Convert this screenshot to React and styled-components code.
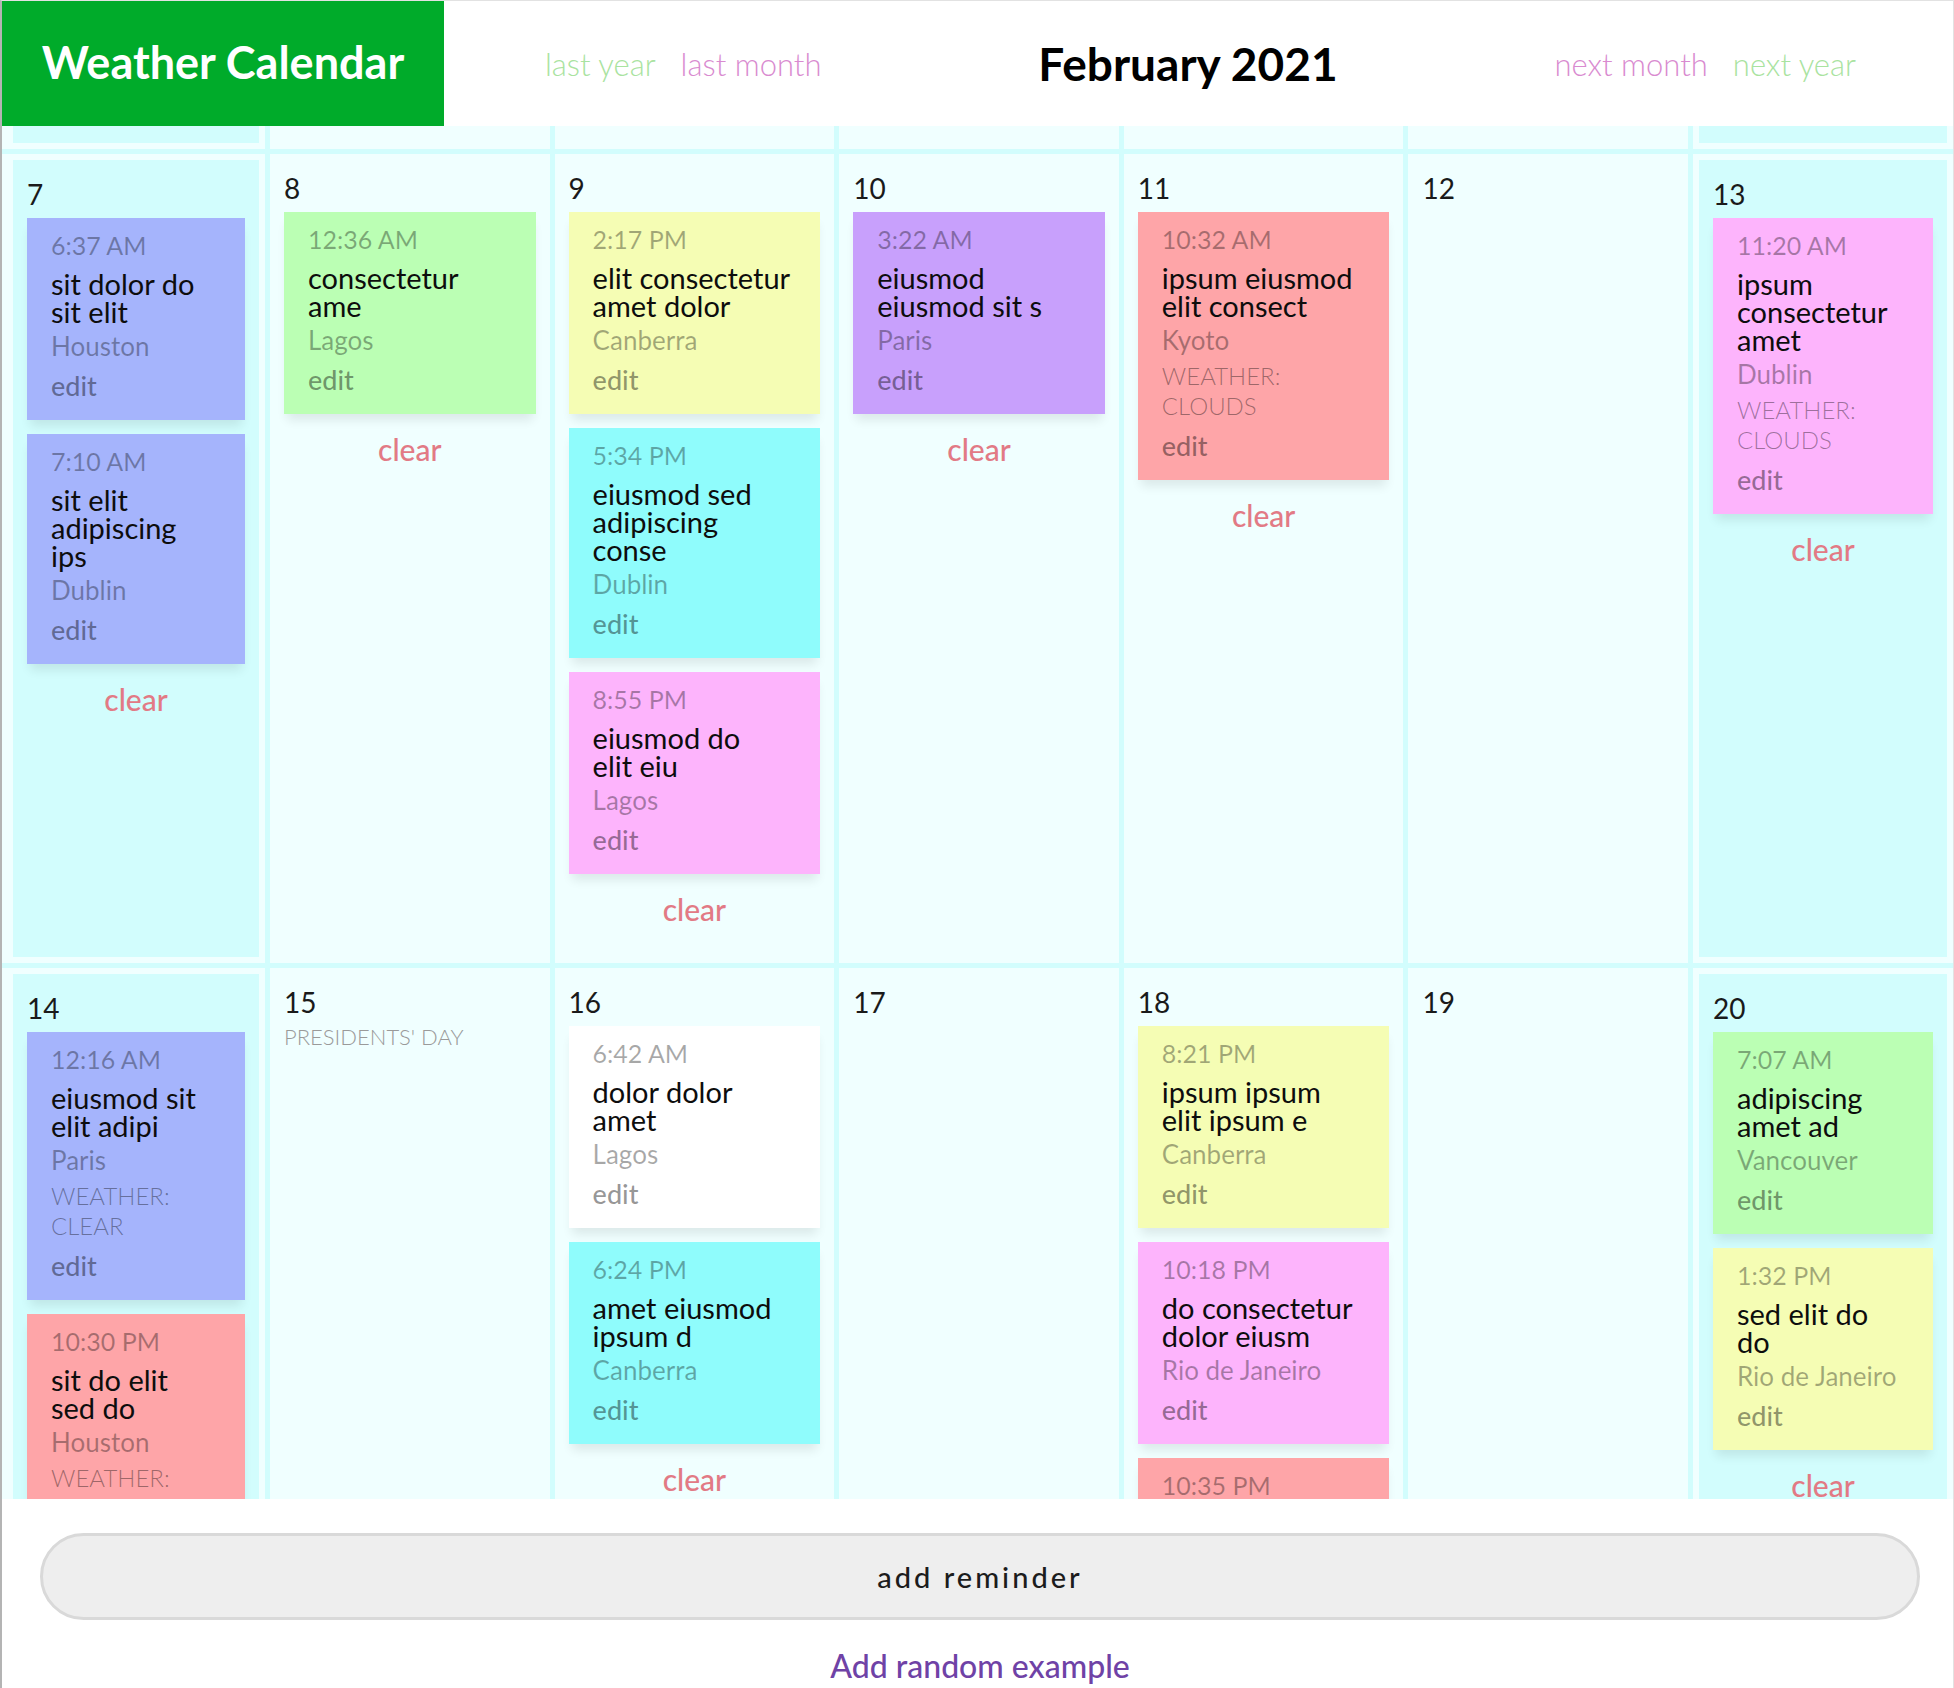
import { useLayoutEffect, useRef } from "react";
import styled, { createGlobalStyle } from "styled-components";

const AZURE = "#f0ffff";
const CYAN = "#d2fdfd";

const palette = {
  blue: "#a5b4fc",
  green: "#bbffb4",
  yellow: "#f5fdb4",
  purple: "#c8a0fc",
  cyan: "#8ffcfc",
  pink: "#fdb4fc",
  red: "#fea5a8",
  white: "#ffffff",
};

const GlobalStyle = createGlobalStyle`
  html, body {
    margin: 0;
    padding: 0;
  }
  body {
    font-family: Lato, "Open Sans", sans-serif;
    background: #fff;
    color: #111;
  }
`;

const Page = styled.div`
  box-sizing: border-box;
  height: 100vh;
  display: flex;
  flex-direction: column;
  border-left: 2px solid #b4b4b4;
  border-top: 1px solid #e2e2e2;
  border-right: 1px solid #e2e2e2;
`;

const Header = styled.header`
  flex-shrink: 0;
  height: 125px;
  display: flex;
`;

const Brand = styled.h1`
  margin: 0;
  padding-bottom: 4px;
  width: 442px;
  background: #00ab2a;
  color: #fff;
  font-size: 45px;
  font-weight: 700;
  display: flex;
  align-items: center;
  justify-content: center;
`;

const Nav = styled.nav`
  flex: 1;
  display: flex;
  align-items: center;
  justify-content: space-between;
  padding: 0 97px 0 101px;
`;

const NavGroup = styled.div`
  display: flex;
  gap: 25px;
`;

const NavLink = styled.a`
  font-size: 31px;
  font-weight: 300;
  cursor: pointer;
  color: ${(p) => (p.$tone === "year" ? "#a9e3a0" : "#d98bd0")};
`;

const MonthTitle = styled.h2`
  margin: 0;
  font-size: 46px;
  font-weight: 700;
  color: #000;
`;

const Calendar = styled.div`
  flex: 1;
  min-height: 0;
  overflow: hidden;
  position: relative;
  background: ${CYAN};
  display: grid;
  gap: 5px;
  align-content: start;
`;

const Week = styled.div`
  display: grid;
  grid-template-columns: 263px repeat(5, minmax(0, 1fr)) 260px;
  gap: 5px;
`;

const Day = styled.div`
  box-sizing: border-box;
  min-width: 0;
  padding: 16px 14px 39px;
  background: ${(p) => (p.$weekend ? CYAN : AZURE)};
  border: ${(p) => (p.$weekend ? `6px solid ${AZURE}` : "none")};
  &:first-child {
    border-left-width: 11px;
  }
`;

const DayNumber = styled.div`
  font-size: 28px;
  line-height: 36px;
  margin-bottom: 6px;
  color: #1a1a1a;
`;

const Holiday = styled.div`
  margin-top: -1px;
  font-size: 22px;
  line-height: 24px;
  font-weight: 300;
  color: #9a9a9a;
  text-transform: uppercase;
`;

const Card = styled.div`
  background: ${(p) => palette[p.$color]};
  padding: 12px 24px 19px;
  margin-bottom: 14px;
  box-shadow: 0 9px 10px -3px rgba(0, 0, 0, 0.09);
`;

const Time = styled.div`
  font-size: 25px;
  line-height: 30px;
  color: rgba(0, 0, 0, 0.34);
`;

const Title = styled.div`
  margin-top: 10px;
  font-size: 29px;
  line-height: 28px;
  color: #0d0d0d;
  white-space: pre-line;
`;

const City = styled.div`
  margin-top: 5px;
  font-size: 26px;
  line-height: 30px;
  color: rgba(0, 0, 0, 0.34);
`;

const Weather = styled.div`
  margin: 6px 0;
  font-size: 24px;
  line-height: 30px;
  font-weight: 300;
  color: rgba(0, 0, 0, 0.38);
  text-transform: uppercase;
`;

const Edit = styled.a`
  display: block;
  margin-top: 10px;
  font-size: 27px;
  line-height: 30px;
  font-weight: 500;
  color: rgba(0, 0, 0, 0.42);
  cursor: pointer;
`;

const Clear = styled.button`
  display: block;
  margin: 20px auto 0;
  padding: 0;
  border: none;
  background: none;
  font-family: inherit;
  font-size: 30px;
  line-height: 30px;
  font-weight: 500;
  color: #e27a85;
  cursor: pointer;
`;

const Footer = styled.footer`
  flex-shrink: 0;
  display: flex;
  flex-direction: column;
  align-items: center;
  padding: 34px 33px 4px 38px;
`;

const AddButton = styled.button`
  align-self: stretch;
  height: 87px;
  border-radius: 44px;
  background: #eeeeee;
  border: 3px solid #d9d9d9;
  font-family: inherit;
  font-size: 29px;
  font-weight: 500;
  letter-spacing: 3px;
  color: #1c1c1c;
  cursor: pointer;
`;

const RandomLink = styled.a`
  margin-top: 28px;
  font-size: 32px;
  line-height: 36px;
  font-weight: 500;
  color: #6f42a6;
  cursor: pointer;
`;

const weeks = [
  [
    { day: 31, weekend: true },
    { day: 1 },
    { day: 2 },
    { day: 3 },
    { day: 4 },
    { day: 5 },
    { day: 6, weekend: true },
  ],
  [
    {
      day: 7,
      weekend: true,
      reminders: [
        { time: "6:37 AM", title: "sit dolor do\nsit elit", city: "Houston", color: "blue" },
        { time: "7:10 AM", title: "sit elit\nadipiscing\nips", city: "Dublin", color: "blue" },
      ],
    },
    {
      day: 8,
      reminders: [{ time: "12:36 AM", title: "consectetur\name", city: "Lagos", color: "green" }],
    },
    {
      day: 9,
      reminders: [
        { time: "2:17 PM", title: "elit consectetur\namet dolor", city: "Canberra", color: "yellow" },
        { time: "5:34 PM", title: "eiusmod sed\nadipiscing\nconse", city: "Dublin", color: "cyan" },
        { time: "8:55 PM", title: "eiusmod do\nelit eiu", city: "Lagos", color: "pink" },
      ],
    },
    {
      day: 10,
      reminders: [{ time: "3:22 AM", title: "eiusmod\neiusmod sit s", city: "Paris", color: "purple" }],
    },
    {
      day: 11,
      reminders: [
        { time: "10:32 AM", title: "ipsum eiusmod\nelit consect", city: "Kyoto", color: "red", weather: "clouds" },
      ],
    },
    { day: 12 },
    {
      day: 13,
      weekend: true,
      reminders: [
        { time: "11:20 AM", title: "ipsum\nconsectetur\namet", city: "Dublin", color: "pink", weather: "clouds" },
      ],
    },
  ],
  [
    {
      day: 14,
      weekend: true,
      reminders: [
        { time: "12:16 AM", title: "eiusmod sit\nelit adipi", city: "Paris", color: "blue", weather: "clear" },
        { time: "10:30 PM", title: "sit do elit\nsed do", city: "Houston", color: "red", weather: "rain" },
      ],
    },
    { day: 15, holiday: "Presidents' Day" },
    {
      day: 16,
      reminders: [
        { time: "6:42 AM", title: "dolor dolor\namet", city: "Lagos", color: "white" },
        { time: "6:24 PM", title: "amet eiusmod\nipsum d", city: "Canberra", color: "cyan" },
      ],
    },
    { day: 17 },
    {
      day: 18,
      reminders: [
        { time: "8:21 PM", title: "ipsum ipsum\nelit ipsum e", city: "Canberra", color: "yellow" },
        { time: "10:18 PM", title: "do consectetur\ndolor eiusm", city: "Rio de Janeiro", color: "pink" },
        { time: "10:35 PM", title: "amet sed\nipsum do", city: "Kyoto", color: "red" },
      ],
    },
    { day: 19 },
    {
      day: 20,
      weekend: true,
      reminders: [
        { time: "7:07 AM", title: "adipiscing\namet ad", city: "Vancouver", color: "green" },
        { time: "1:32 PM", title: "sed elit do\ndo", city: "Rio de Janeiro", color: "yellow" },
      ],
    },
  ],
];

const Reminder = ({ r }) => (
  <Card $color={r.color}>
    <Time>{r.time}</Time>
    <Title>{r.title}</Title>
    <City>{r.city}</City>
    {r.weather && (
      <Weather>
        <div>Weather:</div>
        <div>{r.weather}</div>
      </Weather>
    )}
    <Edit>edit</Edit>
  </Card>
);

const DayCell = ({ d }) => (
  <Day $weekend={d.weekend}>
    <DayNumber>{d.day}</DayNumber>
    {d.holiday && <Holiday>{d.holiday}</Holiday>}
    {d.reminders && (
      <>
        {d.reminders.map((r) => (
          <Reminder key={r.time} r={r} />
        ))}
        <Clear>clear</Clear>
      </>
    )}
  </Day>
);

export default function App() {
  const calRef = useRef(null);
  const weekRef = useRef(null);

  useLayoutEffect(() => {
    // keep the current week at the top with a sliver of the previous one
    if (calRef.current && weekRef.current) {
      calRef.current.scrollTop = weekRef.current.offsetTop - 28;
    }
  }, []);

  return (
    <>
      <GlobalStyle />
      <Page>
        <Header>
          <Brand>Weather Calendar</Brand>
          <Nav>
            <NavGroup>
              <NavLink $tone="year">last year</NavLink>
              <NavLink>last month</NavLink>
            </NavGroup>
            <MonthTitle>February 2021</MonthTitle>
            <NavGroup>
              <NavLink>next month</NavLink>
              <NavLink $tone="year">next year</NavLink>
            </NavGroup>
          </Nav>
        </Header>
        <Calendar ref={calRef}>
          {weeks.map((week, i) => (
            <Week key={i} ref={i === 1 ? weekRef : null}>
              {week.map((d) => (
                <DayCell key={d.day} d={d} />
              ))}
            </Week>
          ))}
        </Calendar>
        <Footer>
          <AddButton>add reminder</AddButton>
          <RandomLink>Add random example</RandomLink>
        </Footer>
      </Page>
    </>
  );
}
